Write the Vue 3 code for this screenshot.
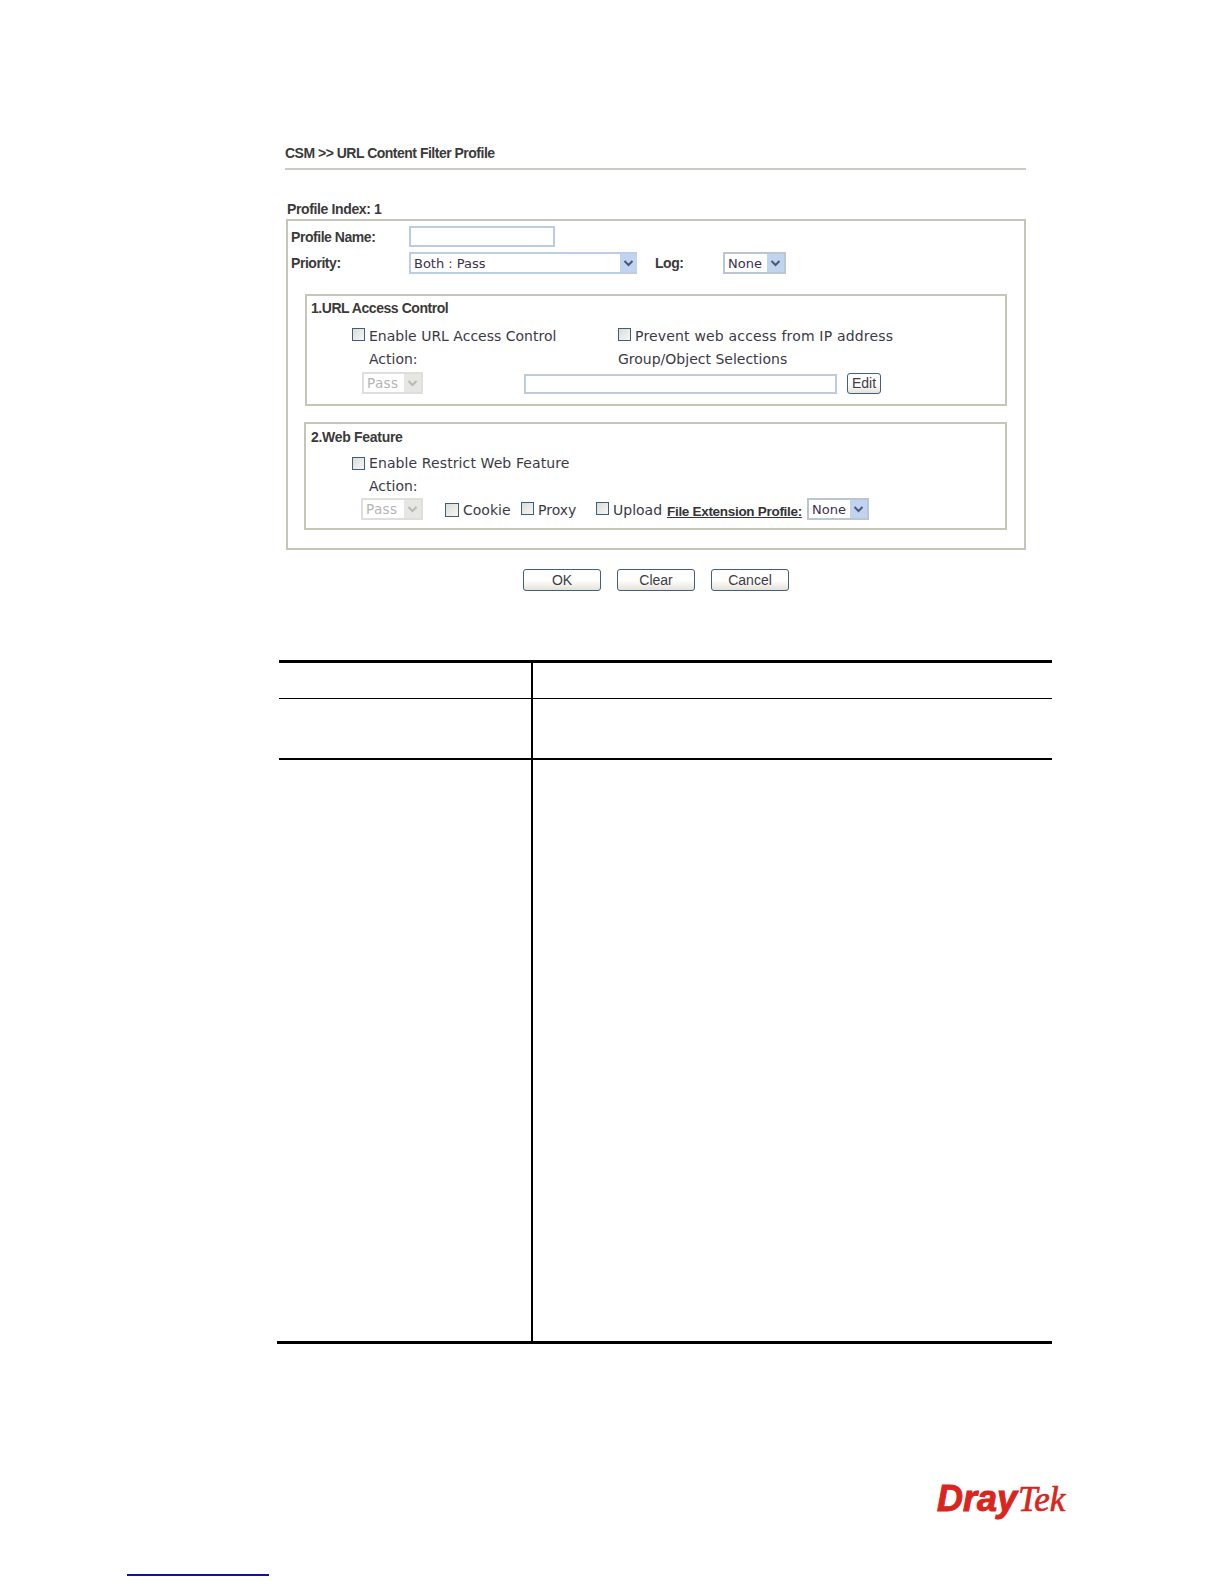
<script setup>
const buttons = ['OK', 'Clear', 'Cancel']
</script>

<template>
  <div class="page">
    <div class="form-area">
      <div class="title">CSM &gt;&gt; URL Content Filter Profile</div>
      <div class="index">Profile Index: 1</div>
      <div class="box">
        <div class="row r1">
          <span class="lbl name-lbl">Profile Name:</span>
          <span class="field name-field"></span>
        </div>
        <div class="row r2">
          <span class="lbl name-lbl">Priority:</span>
          <span class="sel open prio"><span class="val">Both : Pass</span><span class="arrow"><svg viewBox="0 0 17 18"><path d="M4.5 7l4 4 4-4" /></svg></span></span>
          <span class="lbl log-lbl">Log:</span>
          <span class="sel log"><span class="val">None</span><span class="arrow"><svg viewBox="0 0 17 18"><path d="M4.5 7l4 4 4-4" /></svg></span></span>
        </div>

        <section class="group g1">
          <div class="head">1.URL Access Control</div>
          <div class="row check-row">
            <label class="chk first"><i class="cb"></i>Enable URL Access Control</label>
            <label class="chk wider"><i class="cb"></i>Prevent web access from IP address</label>
          </div>
          <div class="row text-row">
            <span class="action">Action:</span>
            <span>Group/Object Selections</span>
          </div>
          <div class="row ctl-row">
            <span class="sel off pass1"><span class="val">Pass</span><span class="arrow"><svg viewBox="0 0 17 18"><path d="M4.5 7l4 4 4-4" /></svg></span></span>
            <span class="field obj-field"></span>
            <span class="btn edit">Edit</span>
          </div>
        </section>

        <section class="group g2">
          <div class="head">2.Web Feature</div>
          <div class="row check-row two">
            <label class="chk first restrict"><i class="cb"></i>Enable Restrict Web Feature</label>
          </div>
          <div class="row text-row">
            <span class="action">Action:</span>
          </div>
          <div class="row ctl-row low">
            <span class="sel off pass2"><span class="val">Pass</span><span class="arrow"><svg viewBox="0 0 17 18"><path d="M4.5 7l4 4 4-4" /></svg></span></span>
            <label class="chk cookie"><i class="cb"></i>Cookie</label>
            <label class="chk proxy"><i class="cb"></i>Proxy</label>
            <label class="chk upload"><i class="cb"></i>Upload</label>
            <a class="ext">File Extension Profile:</a>
            <span class="sel ext-sel"><span class="val">None</span><span class="arrow"><svg viewBox="0 0 17 18"><path d="M4.5 7l4 4 4-4" /></svg></span></span>
          </div>
        </section>
      </div>
      <div class="actions">
        <span v-for="b in buttons" :key="b" class="btn wide">{{ b }}</span>
      </div>
    </div>

    <div class="table">
      <div class="cell c1 h"></div><div class="cell c2 h"></div>
      <div class="cell c1 m"></div><div class="cell c2 m"></div>
      <div class="cell c1 l"></div><div class="cell c2 l"></div>
    </div>
    <div class="table-end"></div>

    <div class="logo"><span class="dray">Dray</span><span class="tek">Tek</span></div>
    <div class="foot"></div>
  </div>
</template>

<style>
html, body { margin: 0; background: #fff; }
</style>

<style scoped>
.page {
  width: 1224px;
  height: 1584px;
  background: #fff;
  overflow: hidden;
  display: flex;
  flex-direction: column;
  font-family: "DejaVu Sans", sans-serif;
  color: #3a3a46;
}
.form-area { margin: 142px 0 0 285px; width: 741px; }
.title {
  height: 26px;
  border-bottom: 2px solid #cbcbc6;
  font: 700 14px/22px "Liberation Sans", sans-serif;
  color: #3a3a3a;
  letter-spacing: -0.5px;
}
.index {
  margin: 28px 0 0 2px;
  height: 21px;
  font: 700 14px/22px "Liberation Sans", sans-serif;
  color: #3a3a3a;
  letter-spacing: -0.37px;
}
.box {
  margin-left: 1px;
  box-sizing: border-box;
  height: 331px;
  border: 2px solid #c6c6b8;
  padding-top: 5px;
}
.row { display: flex; align-items: center; }
.r1 { height: 21px; padding-left: 3px; }
.r2 { height: 22px; padding-left: 3px; margin-top: 5px; }
.lbl { font: 700 14px/20px "Liberation Sans", sans-serif; color: #3a3a3a; letter-spacing: -0.45px; }
.name-lbl { width: 118px; }
.field { display: block; box-sizing: border-box; border: 2px solid #bccbde; background: #fff; }
.name-field { width: 146px; height: 21px; }
.sel {
  display: flex;
  align-items: center;
  box-sizing: border-box;
  height: 22px;
  border: 2px solid #bbc6d5;
  font-size: 13px;
  color: #3c3050;
  background: #fff;
}
.sel .val { flex: 1; padding-left: 3px; white-space: nowrap; overflow: hidden; }
.arrow { flex: none; display: block; width: 17px; height: 18px; background: #c2d3ef; }
.arrow svg { display: block; width: 17px; height: 18px; }
.arrow path { fill: none; stroke: #45597d; stroke-width: 2; }
.sel.open { border-color: #bccde5; border-right: 0; }
.prio { width: 228px; }
.log-lbl { margin-left: 18px; width: 68px; }
.log { width: 63px; }

.group {
  box-sizing: border-box;
  margin: 20px 17px 0;
  height: 112px;
  border: 2px solid #c6c6b6;
}
.g2 { margin: 16px 17px 0 16px; height: 108px; padding-top: 1px; }
.head {
  height: 24px;
  padding-left: 4px;
  font: 700 14px/25px "Liberation Sans", sans-serif;
  color: #3a3a3a;
  letter-spacing: -0.45px;
}
.g2 .head { padding-left: 5px; letter-spacing: -0.3px; }
.check-row { height: 22px; margin-top: 4px; padding-left: 45px; font-size: 14px; }
.check-row.two { height: 20px; padding-left: 46px; }
.text-row { height: 20px; margin-top: 3px; padding-left: 62px; font-size: 14px; }
.g2 .text-row { padding-left: 63px; }
.action { width: 249px; }
.ctl-row { height: 22px; margin-top: 3px; padding-left: 55px; }
.ctl-row.low { margin-top: 2px; padding-left: 56px; font-size: 14px; }
.chk { display: flex; align-items: center; white-space: nowrap; font-size: 14px; }
.chk.first { width: 266px; }
.g1 .chk { margin-top: 2px; }
.g1 .chk .cb { margin-bottom: 4px; }
.wider { letter-spacing: 0.18px; }
.restrict { letter-spacing: 0.1px; }
.cb {
  display: block;
  box-sizing: border-box;
  flex: none;
  width: 13px;
  height: 13px;
  margin-right: 4px;
  border: 1.5px solid #3f5d7d;
  background: linear-gradient(135deg, #dcdcd6, #f6f6f4);
}
.off { border-color: #dededa; color: #b4b4b4; background: #fff; font-size: 13.5px; letter-spacing: 0.4px; }
.off .arrow { background: #e6e6e2; }
.off .arrow path { stroke: #b8b8b4; }
.pass1 { width: 61px; }
.obj-field { width: 313px; height: 20px; margin: 2px 0 0 101px; }
.btn {
  display: flex;
  align-items: center;
  justify-content: center;
  box-sizing: border-box;
  border: 1.5px solid #41607f;
  border-radius: 3px;
  background: linear-gradient(#ffffff 50%, #e4e2d8);
  font: 14px "Liberation Sans", sans-serif;
  color: #3c3c48;
}
.edit { width: 34px; height: 21px; margin-left: 10px; }
.pass2 { width: 62px; margin-left: -1px; }
.cookie { width: 76px; margin: 2px 0 0 22px; }
.cookie .cb { width: 14px; height: 14px; }
.proxy { width: 75px; margin-top: 2px; }
.upload { width: 71px; margin-top: 2px; }
.proxy .cb, .upload .cb { margin-bottom: 3px; }
.ext {
  width: 140px;
  margin-top: 5px;
  font: 700 13.5px/18px "Liberation Sans", sans-serif;
  letter-spacing: -0.3px;
  color: #333;
  text-decoration: underline;
  white-space: nowrap;
}
.ext-sel { width: 62px; }

.actions { display: flex; gap: 16px; margin: 19px 0 0 238px; }
.wide { width: 78px; height: 22px; }

.table {
  margin: 69px 0 0 279px;
  width: 773px;
  display: grid;
  grid-template-columns: 254px 1fr;
  border-top: 3px solid #000;
}
.cell { box-sizing: border-box; }
.c1 { border-right: 2px solid #000; }
.h { height: 35px; }
.m { height: 60px; border-top: 1px solid #000; }
.l { height: 583px; border-top: 2px solid #000; }
.table-end { margin-left: 277px; width: 775px; height: 3px; background: #000; }

.logo {
  margin: 135px 0 0 937px;
  height: 40px;
  display: flex;
  align-items: baseline;
  color: #d9251d;
  white-space: nowrap;
}
.dray {
  font: italic 700 36px/40px "Liberation Sans", sans-serif;
  -webkit-text-stroke: 1px #d9251d;
}
.tek {
  margin-left: 1px;
  font: italic 400 35px/40px "Liberation Serif", serif;
  -webkit-text-stroke: 0.7px #d9251d;
}
.foot {
  margin: 55px 0 0 127px;
  width: 142px;
  height: 2px;
  background: #12129a;
}
</style>
